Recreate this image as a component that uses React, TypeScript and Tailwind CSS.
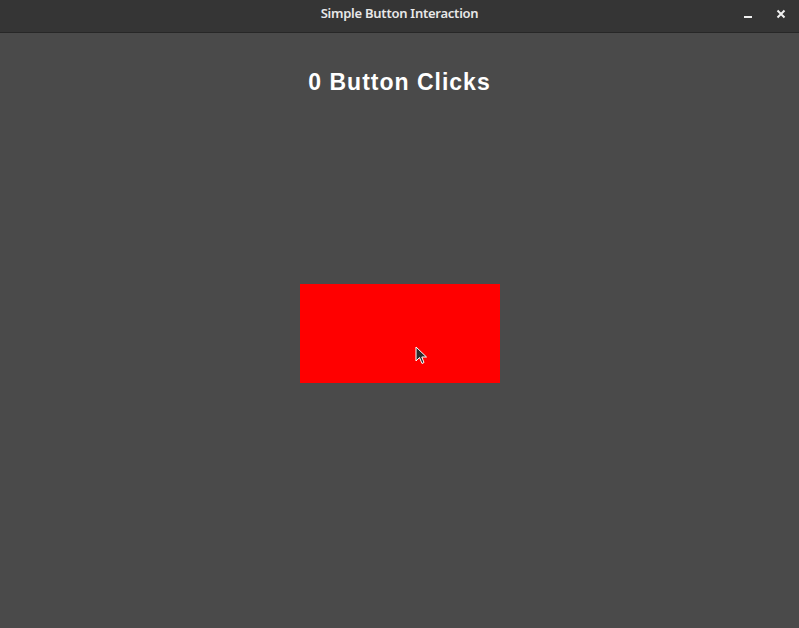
import React, { useState } from 'react';

export default function App() {
  const [clicks, setClicks] = useState(0);

  return (
    <div className="w-[799px] h-[628px] flex flex-col bg-[#4a4a4a] overflow-hidden">
      <div className="h-[33px] shrink-0 relative flex items-center justify-center pb-[4px] bg-[#353535] border-b border-[#272727]">
        <span className="text-[13px] font-semibold tracking-[-0.25px] text-[#e8e8e8] [font-family:'Noto_Sans',sans-serif]">
          Simple Button Interaction
        </span>
        <div className="absolute right-0 top-0 h-full flex items-center gap-[23px] pr-[13px] pb-[4px]">
          <svg width="10" height="10" viewBox="0 0 10 10">
            <rect x="1" y="7" width="8" height="2" fill="#f0f0f0" />
          </svg>
          <svg width="10" height="10" viewBox="0 0 10 10">
            <path d="M1.5 1.5 L8.5 8.5 M8.5 1.5 L1.5 8.5" stroke="#f0f0f0" strokeWidth="2" />
          </svg>
        </div>
      </div>
      <div className="flex-1 flex flex-col items-center">
        <h1 className="mt-[34px] text-[23px] leading-[30px] font-bold tracking-[1px] text-white [font-family:'Liberation_Sans',Arial,sans-serif]">
          {clicks} Button Clicks
        </h1>
        <button
          type="button"
          onClick={() => setClicks(clicks + 1)}
          className="relative mt-[187px] w-[200px] h-[99px] bg-[#ff0000]"
        >
          <svg className="absolute left-[115px] top-[62px]" width="14" height="20" viewBox="0 0 14 20">
            <path d="M1 1 L1 15 L4.5 11.5 L7 17.5 L9 16.5 L6.8 11 L11.5 11 Z" fill="#2a2a2a" stroke="#ffffff" strokeWidth="1" strokeLinejoin="round" />
          </svg>
        </button>
      </div>
    </div>
  );
}
